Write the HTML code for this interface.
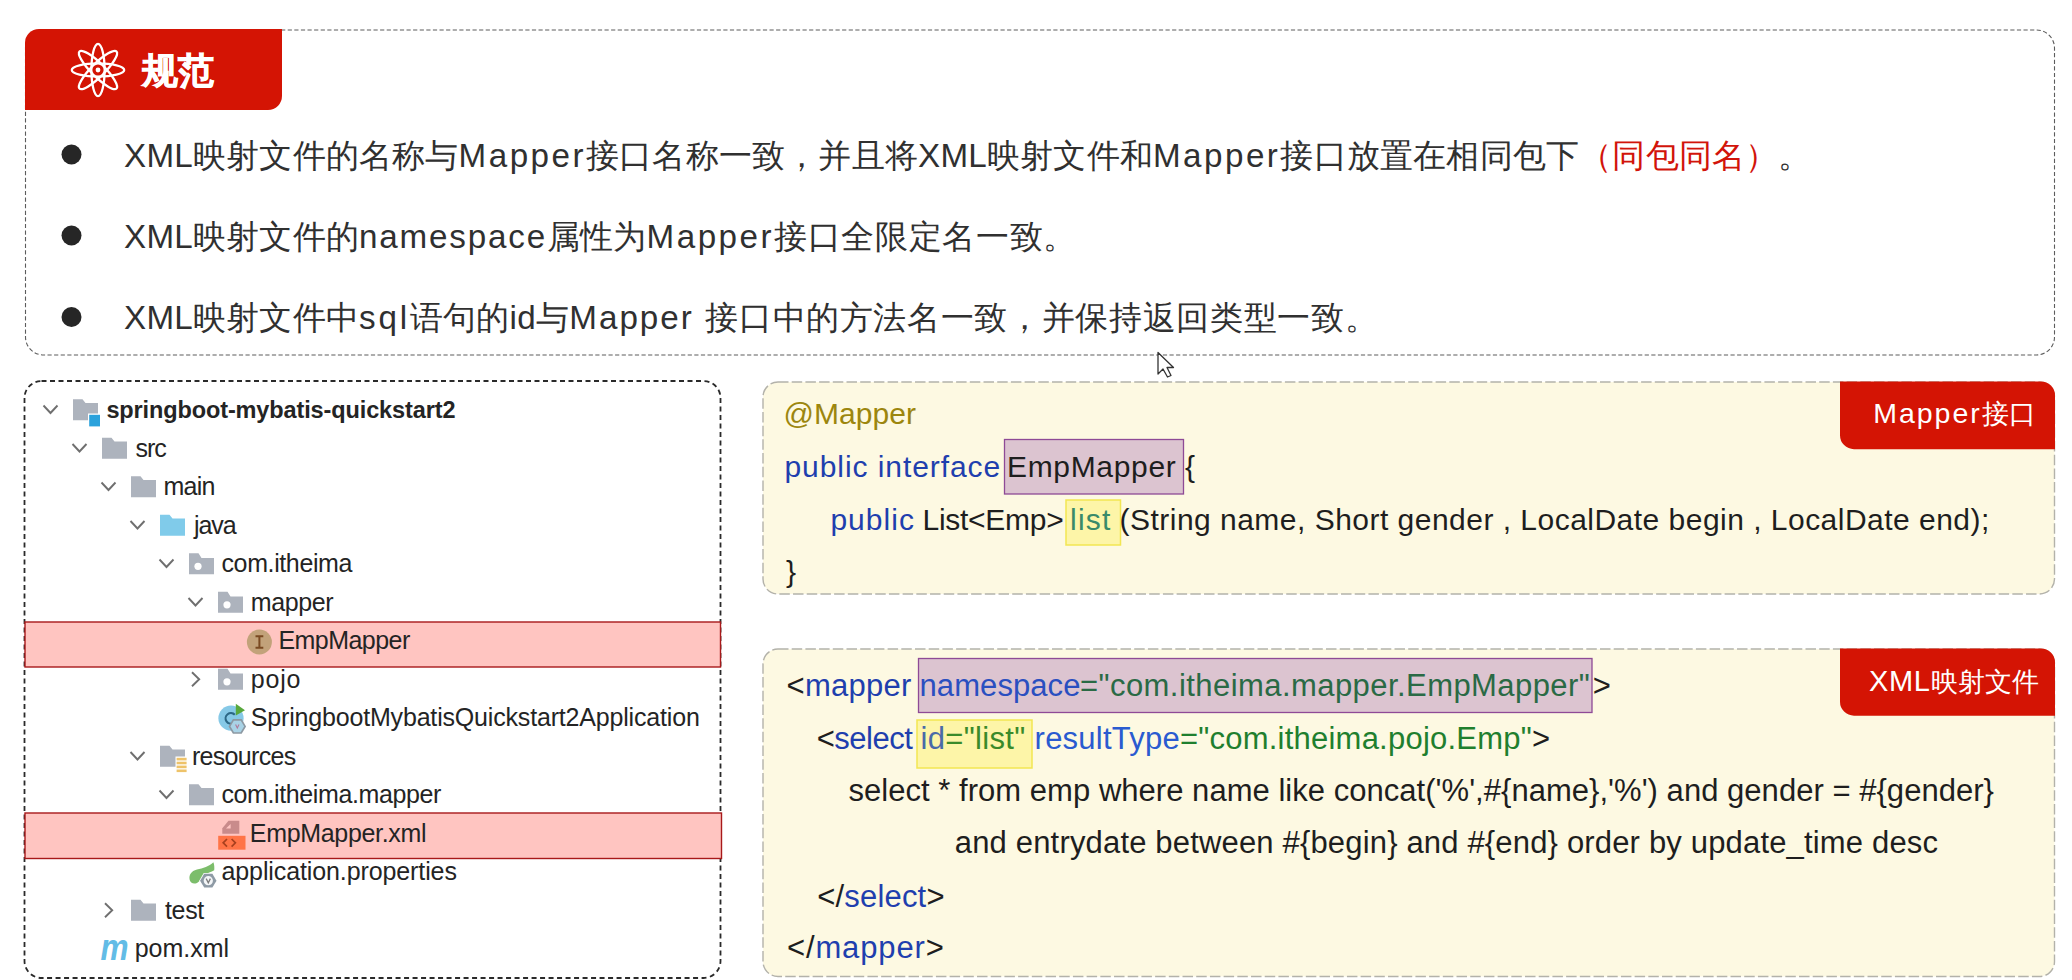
<!DOCTYPE html>
<html><head><meta charset="utf-8">
<style>
html,body{margin:0;padding:0;width:2072px;height:980px;overflow:hidden;background:#fff}
body{position:relative;font-family:"Liberation Sans",sans-serif}
.t{position:absolute;white-space:pre;line-height:44px}
.ib,.ibm{display:inline-block}
svg{position:absolute;left:0;top:0}
</style></head><body>
<svg width="2072" height="980" viewBox="0 0 2072 980">
  <!-- top box -->
  <rect x="25.5" y="30" width="2029" height="325" rx="18" ry="18" fill="#fff" stroke="#5c5c5c" stroke-width="1.1" stroke-dasharray="4.2 2.4"/>
  <path d="M25 43 A14 14 0 0 1 39 29 L282 29 L282 96 A14 14 0 0 1 268 110 L25 110 Z" fill="#d41404"/>
  <!-- atom -->
  <g transform="translate(98,70)" fill="none" stroke="#fff" stroke-width="2.3">
    <ellipse rx="6.6" ry="26.2"/>
    <ellipse rx="6.6" ry="26.2" transform="rotate(45)"/>
    <ellipse rx="6.6" ry="26.2" transform="rotate(90)"/>
    <ellipse rx="6.6" ry="26.2" transform="rotate(135)"/>
    <circle r="7.4" fill="#fff" stroke="none"/>
    <circle r="5.6" fill="#d41404" stroke="none"/>
    <circle r="2.4" fill="#fff" stroke="none"/>
  </g>
  <!-- bullets -->
  <circle cx="71.5" cy="154.5" r="10" fill="#262626"/>
  <circle cx="71.5" cy="235.5" r="10" fill="#262626"/>
  <circle cx="71.5" cy="317" r="10" fill="#262626"/>

  <!-- tree box -->
  <rect x="24.5" y="381" width="696" height="597" rx="17" ry="17" fill="#fff" stroke="#2a2a2a" stroke-width="1.8" stroke-dasharray="5 3.5"/>
  <rect x="25" y="622" width="695.5" height="45" fill="#ffc5c1" stroke="#a8191a" stroke-width="1.4"/>
  <rect x="25" y="813" width="696.5" height="45.5" fill="#ffc5c1" stroke="#a8191a" stroke-width="1.4"/>

  <!-- code box 1 -->
  <rect x="763" y="382" width="1291.5" height="212" rx="15" ry="15" fill="#fdf9e2" stroke="#b3b2aa" stroke-width="1.4" stroke-dasharray="10.5 3.2"/>
  <path d="M1840 381.4 L2041 381.4 A14 14 0 0 1 2055 395.4 L2055 449.2 L1854 449.2 A14 14 0 0 1 1840 435.2 Z" fill="#d41404"/>
  <rect x="1004.5" y="439.5" width="179" height="54.5" fill="#dcc4d0" stroke="#8e4a96" stroke-width="1.3"/>
  <rect x="1066" y="500" width="54.5" height="45" fill="#fdf5a8" stroke="#f2e652" stroke-width="1.5"/>

  <!-- code box 2 -->
  <rect x="763" y="649" width="1291.5" height="327.5" rx="15" ry="15" fill="#fdf9e2" stroke="#b3b2aa" stroke-width="1.4" stroke-dasharray="10.5 3.2"/>
  <path d="M1840 648.4 L2041 648.4 A14 14 0 0 1 2055 662.4 L2055 715.7 L1854 715.7 A14 14 0 0 1 1840 701.7 Z" fill="#d41404"/>
  <rect x="918.5" y="658.5" width="673.5" height="54" fill="#dcc4d0" stroke="#8e4a96" stroke-width="1.3"/>
  <rect x="917" y="720" width="115" height="48" fill="#fdf5a8" stroke="#f2e652" stroke-width="1.5"/>

  <!-- cursor -->
  <path d="M1158 352.5 L1158 374 L1163 369 L1167.5 377 L1171 375.5 L1167 367.5 L1173.5 367.5 Z" fill="#fff" stroke="#333" stroke-width="1.3" stroke-linejoin="round"/>

  <path d="M43.5 405.5 L50.5 413.0 L57.5 405.5" fill="none" stroke="#6f6f6f" stroke-width="1.9"/>
<path d="M73.0 399.3 h9.5 l3 3.8 h12.5 v17.2 h-25 z" fill="#adb3bd"/>
<rect x="88" y="413.5" width="13" height="14" fill="#fff"/><rect x="89.2" y="414.8" width="10.8" height="11.6" fill="#2ba2dc"/>
<path d="M72.5 444.0 L79.5 451.5 L86.5 444.0" fill="none" stroke="#6f6f6f" stroke-width="1.9"/>
<path d="M102.0 437.8 h9.5 l3 3.8 h12.5 v17.2 h-25 z" fill="#adb3bd"/>
<path d="M101.5 482.5 L108.5 490.0 L115.5 482.5" fill="none" stroke="#6f6f6f" stroke-width="1.9"/>
<path d="M131.0 476.3 h9.5 l3 3.8 h12.5 v17.2 h-25 z" fill="#adb3bd"/>
<path d="M130.5 521.0 L137.5 528.5 L144.5 521.0" fill="none" stroke="#6f6f6f" stroke-width="1.9"/>
<path d="M160.0 514.8 h9.5 l3 3.8 h12.5 v17.2 h-25 z" fill="#80cbea"/>
<path d="M159.5 559.5 L166.5 567.0 L173.5 559.5" fill="none" stroke="#6f6f6f" stroke-width="1.9"/>
<path d="M189.0 553.3 h9.5 l3 4.8 h12.5 v16.2 h-25 z" fill="#adb3bd"/>
<circle cx="198.0" cy="566.3" r="3.6" fill="#fff"/>
<path d="M188.5 598.0 L195.5 605.5 L202.5 598.0" fill="none" stroke="#6f6f6f" stroke-width="1.9"/>
<path d="M218.0 591.8 h9.5 l3 4.8 h12.5 v16.2 h-25 z" fill="#adb3bd"/>
<circle cx="227.0" cy="604.8" r="3.6" fill="#fff"/>
<circle cx="259.4" cy="642" r="12.5" fill="#c2a27a"/>
<path d="M255.5 636.2 h7.8 M259.4 636.2 v11.6 M255.5 647.8 h7.8" stroke="#7a4a22" stroke-width="2" fill="none"/>
<path d="M192.0 672.3 L199.2 679.3 L192.0 686.3" fill="none" stroke="#6f6f6f" stroke-width="1.9"/>
<path d="M218.0 668.8 h9.5 l3 4.8 h12.5 v16.2 h-25 z" fill="#adb3bd"/>
<circle cx="227.0" cy="681.8" r="3.6" fill="#fff"/>
<circle cx="231" cy="718.2" r="12.6" fill="#86c9e7"/>
<path d="M234.8 714.8 A5.3 5.3 0 1 0 233.5 723" fill="none" stroke="#2c6886" stroke-width="2.1"/>
<path d="M235.8 703.8 L245 710.2 L235.8 715.6 Z" fill="#58a83c"/>
<path d="M233.4 719.8 L241.2 719.8 L245.1 726.4 L241.2 733 L233.4 733 L229.5 726.4 Z" fill="#a9d3e6" stroke="#8d99a3" stroke-width="1.7"/>
<path d="M235.6 724.4 L237.3 728 L239 724.4" fill="none" stroke="#b07a9a" stroke-width="1.1"/>
<path d="M130.5 752.0 L137.5 759.5 L144.5 752.0" fill="none" stroke="#6f6f6f" stroke-width="1.9"/>
<path d="M160.0 745.8 h9.5 l3 3.8 h12.5 v17.2 h-25 z" fill="#adb3bd"/>
<rect x="175.5" y="756.5" width="12" height="17" fill="#fff"/>
<rect x="176.6" y="757.8" width="10" height="2.6" fill="#eec36a"/>
<rect x="176.6" y="761.7" width="10" height="2.6" fill="#eec36a"/>
<rect x="176.6" y="765.6" width="10" height="2.6" fill="#eec36a"/>
<rect x="176.6" y="769.5" width="10" height="2.6" fill="#eec36a"/>
<path d="M159.5 790.5 L166.5 798.0 L173.5 790.5" fill="none" stroke="#6f6f6f" stroke-width="1.9"/>
<path d="M189.0 784.3 h9.5 l3 3.8 h12.5 v17.2 h-25 z" fill="#adb3bd"/>
<path d="M228.5 820.8 h10.8 v13 h-17 v-5.5 z" fill="#c98b8b"/>
<path d="M226 828.6 h4.6 v-4.6 z" fill="#ffc6c3"/>
<rect x="218.2" y="835.8" width="27.3" height="13.9" fill="#ff7447"/>
<path d="M227 839 L223.2 842.8 L227 846.6 M231.6 839 L235.4 842.8 L231.6 846.6" fill="none" stroke="#a8401e" stroke-width="1.7"/>
<path d="M213.4 862.2 C209 866.5 203 868 197 869.5 C191 871 188.8 875 189.6 879.5 C190.3 883 193.5 884.5 197 883 C200 881.5 201.5 878 204 875.5 C207 872.5 211.5 872 214.2 870.2 C214.6 867.5 214.2 864.5 213.4 862.2 Z" fill="#7cbd6b"/>
<path d="M204.2 873.8 L212.4 873.8 L216.5 880.7 L212.4 887.6 L204.2 887.6 L200.1 880.7 Z" fill="#8e9aa5" stroke="#fff" stroke-width="1.6" paint-order="stroke"/>
<circle cx="208.3" cy="880.7" r="4.6" fill="#f4f6f8"/>
<path d="M206.2 878.6 L208.3 882.8 L210.4 878.6" fill="none" stroke="#7d7d7d" stroke-width="1.3"/>
<path d="M105.0 903.3 L112.2 910.3 L105.0 917.3" fill="none" stroke="#6f6f6f" stroke-width="1.9"/>
<path d="M131.0 899.8 h9.5 l3 3.8 h12.5 v17.2 h-25 z" fill="#adb3bd"/>
<text x="100.5" y="959.6" font-family="Liberation Sans" font-weight="bold" font-style="italic" font-size="36" fill="#62bce6" textLength="28" lengthAdjust="spacingAndGlyphs">m</text>
</svg>
<div id="s0" class="t" style="left:124.00px;top:133.70px;font-size:33.2px;color:#303030;letter-spacing:0.2px"><span class="ib" style="width:69px;letter-spacing:0.250px">XML</span>映射文件的名称与<span class="ib" style="width:127.4px;letter-spacing:2.478px">Mapper</span>接口名称一致，并且将<span class="ib" style="width:69px;letter-spacing:0.250px">XML</span>映射文件和<span class="ib" style="width:127.4px;letter-spacing:2.478px">Mapper</span>接口放置在相同包下<span style="color:#d2140a">（同包同名）</span>。</div>
<div id="s1" class="t" style="left:124.00px;top:215.20px;font-size:33.2px;color:#303030;letter-spacing:0.2px"><span class="ib" style="width:69px;letter-spacing:0.250px">XML</span>映射文件的<span class="ib" style="width:188px;letter-spacing:1.825px">namespace</span>属性为<span class="ib" style="width:127.4px;letter-spacing:2.478px">Mapper</span><span style="letter-spacing:0.65px">接口全限定名一致。</span></div>
<div id="s2" class="t" style="left:124.00px;top:296.40px;font-size:33.2px;color:#303030;letter-spacing:0.2px"><span class="ib" style="width:69px;letter-spacing:0.250px">XML</span>映射文件中<span class="ib" style="width:51px;letter-spacing:2.854px">sql</span>语句的<span class="ib" style="width:26.4px;letter-spacing:0.278px">id</span>与<span class="ib" style="width:136px;letter-spacing:2.036px">Mapper </span><span style="letter-spacing:0.65px">接口中的方法名一致，并保持返回类型一致。</span></div>
<div id="s3" class="t" style="left:106.40px;top:387.76px;font-size:23.5px;color:#242424;font-weight:bold;letter-spacing:-0.120px">springboot-mybatis-quickstart2</div>
<div id="s4" class="t" style="left:135.50px;top:425.74px;font-size:25px;color:#242424;letter-spacing:-1.000px">src</div>
<div id="s5" class="t" style="left:163.50px;top:464.24px;font-size:25px;color:#242424;letter-spacing:-0.761px">main</div>
<div id="s6" class="t" style="left:193.90px;top:502.74px;font-size:25px;color:#242424;letter-spacing:-1.000px">java</div>
<div id="s7" class="t" style="left:221.50px;top:541.24px;font-size:25px;color:#242424;letter-spacing:-0.386px">com.itheima</div>
<div id="s8" class="t" style="left:250.80px;top:579.74px;font-size:25px;color:#242424;letter-spacing:-0.408px">mapper</div>
<div id="s9" class="t" style="left:278.40px;top:618.24px;font-size:25px;color:#242424;letter-spacing:-0.531px">EmpMapper</div>
<div id="s10" class="t" style="left:250.80px;top:656.74px;font-size:25px;color:#242424;letter-spacing:0.779px">pojo</div>
<div id="s11" class="t" style="left:250.80px;top:695.24px;font-size:25px;color:#242424;letter-spacing:-0.178px">SpringbootMybatisQuickstart2Application</div>
<div id="s12" class="t" style="left:191.90px;top:733.74px;font-size:25px;color:#242424;letter-spacing:-0.683px">resources</div>
<div id="s13" class="t" style="left:221.50px;top:772.24px;font-size:25px;color:#242424;letter-spacing:-0.391px">com.itheima.mapper</div>
<div id="s14" class="t" style="left:249.80px;top:810.74px;font-size:25px;color:#242424;letter-spacing:-0.322px">EmpMapper.xml</div>
<div id="s15" class="t" style="left:221.50px;top:849.24px;font-size:25px;color:#242424;letter-spacing:-0.107px">application.properties</div>
<div id="s16" class="t" style="left:165.00px;top:887.74px;font-size:25px;color:#242424;letter-spacing:-0.350px">test</div>
<div id="s17" class="t" style="left:134.70px;top:926.24px;font-size:25px;color:#242424;letter-spacing:-0.017px">pom.xml</div>
<div id="s18" class="t" style="left:783.50px;top:392.11px;font-size:30px;color:#9c860e;letter-spacing:0.053px">@Mapper</div>
<div id="s19" class="t" style="left:784.50px;top:444.81px;font-size:30px;color:#1f3fae;letter-spacing:0.927px">public interface</div>
<div id="s20" class="t" style="left:1007.00px;top:444.81px;font-size:30px;color:#1e1e1e;letter-spacing:0.673px">EmpMapper</div>
<div id="s21" class="t" style="left:1185.00px;top:444.81px;font-size:30px;color:#1e1e1e">{</div>
<div id="s22" class="t" style="left:830.40px;top:497.71px;font-size:30px;color:#1f3fae;letter-spacing:1.043px">public</div>
<div id="s23" class="t" style="left:922.50px;top:497.71px;font-size:30px;color:#1e1e1e;letter-spacing:-0.274px">List&lt;Emp&gt;</div>
<div id="s24" class="t" style="left:1070.00px;top:497.71px;font-size:30px;color:#3a8a6a;letter-spacing:1.223px">list</div>
<div id="s25" class="t" style="left:1119.50px;top:497.71px;font-size:30px;color:#1e1e1e;letter-spacing:0.481px">(String name, Short gender , LocalDate begin , LocalDate end);</div>
<div id="s26" class="t" style="left:786.00px;top:549.61px;font-size:30px;color:#1e1e1e">}</div>
<div id="s27" class="t" style="left:786.60px;top:663.66px;font-size:31px;color:#1e1e1e;letter-spacing:0.252px">&lt;<span style="color:#1f3fae">mapper</span></div>
<div id="s28" class="t" style="left:919.50px;top:663.66px;font-size:31px;color:#2a4fc0;letter-spacing:0.084px">namespace</div>
<div id="s29" class="t" style="left:1080.00px;top:663.66px;font-size:31px;color:#2a6a45;letter-spacing:0.437px">="com.itheima.mapper.EmpMapper"</div>
<div id="s30" class="t" style="left:1592.70px;top:663.66px;font-size:31px;color:#1e1e1e">&gt;</div>
<div id="s31" class="t" style="left:816.70px;top:717.26px;font-size:31px;color:#1e1e1e;letter-spacing:-0.495px">&lt;<span style="color:#1f3fae">select</span></div>
<div id="s32" class="t" style="left:920.50px;top:717.26px;font-size:31px;color:#3a8a2a;letter-spacing:0.322px"><span style="color:#4a6aa8">id</span>="list"</div>
<div id="s33" class="t" style="left:1034.60px;top:717.26px;font-size:31px;color:#1f7f2e;letter-spacing:0.230px"><span style="color:#2a5bd0">resultType</span>="com.itheima.pojo.Emp"<span style="color:#1e1e1e">&gt;</span></div>
<div id="s34" class="t" style="left:848.50px;top:769.26px;font-size:31px;color:#1e1e1e;letter-spacing:0.032px">select * from emp where name like concat('%',#{name},'%') and gender = #{gender}</div>
<div id="s35" class="t" style="left:954.80px;top:820.96px;font-size:31px;color:#1e1e1e;letter-spacing:0.168px">and entrydate between #{begin} and #{end} order by update_time desc</div>
<div id="s36" class="t" style="left:817.20px;top:874.76px;font-size:31px;color:#1e1e1e;letter-spacing:0.188px">&lt;/<span style="color:#1f3fae">select</span>&gt;</div>
<div id="s37" class="t" style="left:786.90px;top:926.46px;font-size:31px;color:#1e1e1e;letter-spacing:0.884px">&lt;/<span style="color:#1f3fae">mapper</span>&gt;</div>
<div id="s38" class="t" style="left:1873.20px;top:391.04px;font-size:27px;color:#fff"><span style="font-size:28.5px"><span class="ib" style="width:108.5px;letter-spacing:1.977px">Mapper</span></span>接口</div>
<div id="s39" class="t" style="left:1869.00px;top:659.44px;font-size:27px;color:#fff"><span style="font-size:29px"><span class="ib" style="width:61.5px;letter-spacing:0.620px">XML</span></span>映射文件</div>
<div id="s40" class="t" style="left:142.00px;top:49.03px;font-size:36px;color:#fff;font-weight:bold;-webkit-text-stroke:0.8px #fff">规范</div>
</body></html>
